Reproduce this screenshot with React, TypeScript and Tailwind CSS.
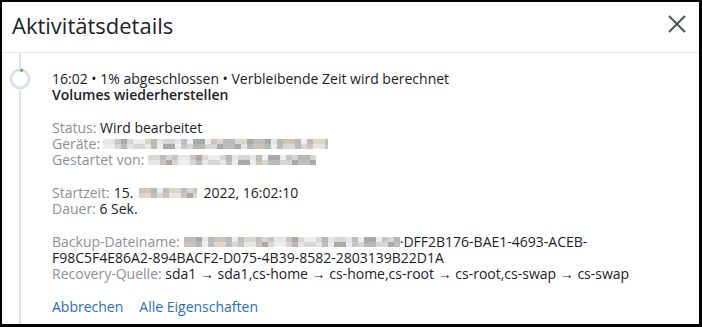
import React from "react"

const shades = [
  "bg-[#d6d6d6]",
  "bg-[#bdbdbd]",
  "bg-[#e6e6e6]",
  "bg-[#a9a9a9]",
  "bg-[#cbc4be]",
  "bg-[#ededed]",
  "bg-[#b8b8b8]",
  "bg-[#dbd5cf]",
]

// pixelated placeholder for redacted values
function Redacted({ width, seed = 1 }: { width: number; seed?: number }) {
  const cols = Math.round(width / 6)
  const rows = [0, 1]
  return (
    <span className="inline-flex flex-col overflow-hidden" style={{ width }}>
      {rows.map((r) => (
        <span key={r} className="flex h-[5px]">
          {Array.from({ length: cols }).map((_, i) => (
            <span
              key={i}
              className={`h-[5px] w-[6px] shrink-0 ${shades[(i * 7 + r * 3 + seed * 5 + ((i * i) % 5)) % shades.length]}`}
            />
          ))}
        </span>
      ))}
    </span>
  )
}

function Label({ children }: { children: React.ReactNode }) {
  return <span className="text-[#8d9096]">{children}</span>
}

function Arrow() {
  return <span style={{ fontFamily: '"Liberation Sans", sans-serif' }}>→</span>
}

function ProgressRing() {
  return (
    <svg width="22" height="22" viewBox="0 0 22 22" className="shrink-0">
      <circle cx="11" cy="11" r="9" fill="none" stroke="#d9e1ea" strokeWidth="3" />
      <circle
        cx="11"
        cy="11"
        r="9"
        fill="none"
        stroke="#6fb43f"
        strokeWidth="3"
        strokeDasharray="3 60"
        transform="rotate(-90 11 11)"
      />
    </svg>
  )
}

export default function App() {
  return (
    <div
      className="flex h-[327px] w-[702px] flex-col border-t-2 border-l-2 border-r-[3px] border-b-[3px] border-black bg-white text-[14px] text-[#1c2127]"
      style={{ fontFamily: '"Open Sans", "Noto Sans", sans-serif' }}
    >
      {/* Header */}
      <div className="flex h-[51px] shrink-0 items-center justify-between border-b border-[#e1e6eb] pl-[10px] pr-[13px]">
        <h1 className="-mt-[4px] text-[22px] leading-none">Aktivitätsdetails</h1>
        <button className="-mt-[6px] flex h-[18px] w-[18px] items-center justify-center">
          <svg width="18" height="18" viewBox="0 0 18 18" fill="none" stroke="#4b535c" strokeWidth="2">
            <path d="M1 1L17 17M17 1L1 17" />
          </svg>
        </button>
      </div>

      {/* Body */}
      <div className="flex min-h-0 flex-1">
        {/* Timeline */}
        <div className="flex w-[36px] shrink-0 flex-col items-center">
          <div className="h-[15px] w-[2px] bg-[#dde3ea]" />
          <ProgressRing />
          <div className="w-[2px] flex-1 bg-[#dde3ea]" />
        </div>

        <div className="flex-1 pl-[14px] pr-4 pt-[18px] leading-4">
          <div>
            <p>16:02 • 1% abgeschlossen • Verbleibende Zeit wird berechnet</p>
            <p className="font-semibold">Volumes wiederherstellen</p>
          </div>

          <div className="mt-[17px]">
            <p>
              <Label>Status:</Label> Wird bearbeitet
            </p>
            <p className="flex items-center">
              <Label>Geräte:</Label>
              <span className="ml-[3px] flex">
                <Redacted width={225} seed={2} />
              </span>
            </p>
            <p className="flex items-center">
              <Label>Gestartet von:</Label>
              <span className="ml-[4px] flex">
                <Redacted width={168} seed={3} />
              </span>
            </p>
          </div>

          <div className="mt-[17px]">
            <p className="flex items-center">
              <Label>Startzeit:</Label>
              <span className="ml-[4px]">15.</span>
              <span className="mx-[6px] flex">
                <Redacted width={58} seed={4} />
              </span>
              <span>2022, 16:02:10</span>
            </p>
            <p>
              <Label>Dauer:</Label> 6 Sek.
            </p>
          </div>

          <div className="mt-[17px]">
            <p className="flex items-center">
              <Label>Backup-Dateiname:</Label>
              <span className="ml-[4px] flex">
                <Redacted width={216} seed={5} />
              </span>
              <span>·DFF2B176-BAE1-4693-ACEB-</span>
            </p>
            <p>F98C5F4E86A2-894BACF2-D075-4B39-8582-2803139B22D1A</p>
            <p className="whitespace-nowrap">
              <Label>Recovery-Quelle:</Label> sda1 <Arrow /> sda1,cs-home <Arrow /> cs-home,cs-root <Arrow />{" "}
              cs-root,cs-swap <Arrow /> cs-swap
            </p>
          </div>

          <div className="mt-[17px] flex gap-4 text-[#2a6cc6]">
            <a href="#">Abbrechen</a>
            <a href="#">Alle Eigenschaften</a>
          </div>
        </div>
      </div>
    </div>
  )
}
